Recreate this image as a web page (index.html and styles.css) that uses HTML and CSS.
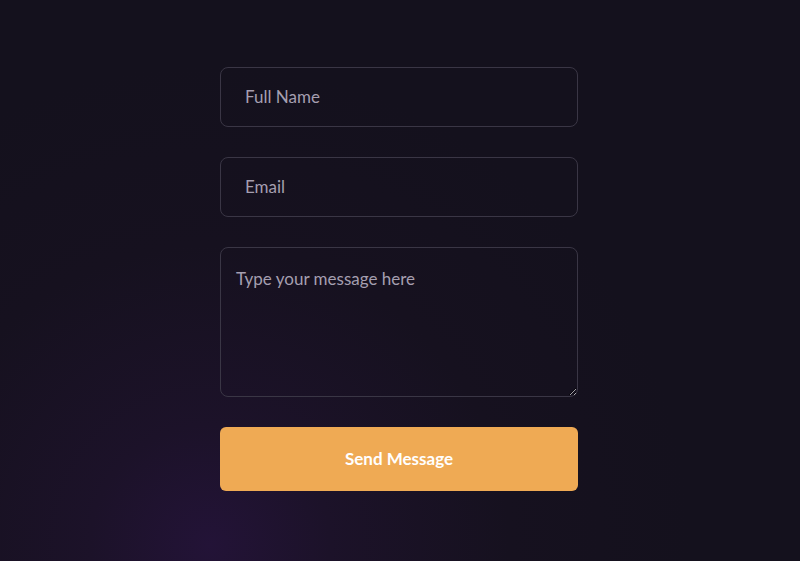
FILE: index.html
```html
<!DOCTYPE html>
<html lang="en">
<head>
<meta charset="utf-8">
<title>Contact</title>
<link rel="stylesheet" href="styles.css">
</head>
<body>
<main class="page">
  <form class="contact-form">
    <input class="field" type="text" placeholder="Full Name">
    <input class="field" type="email" placeholder="Email">
    <textarea class="field field-area" placeholder="Type your message here"></textarea>
    <button class="send" type="button">Send Message</button>
  </form>
</main>
</body>
</html>
```
FILE: styles.css
```css
html, body {
  margin: 0;
  height: 100%;
}
body {
  background-color: #14111d;
  background-image: radial-gradient(circle at 210px 545px, #231337 0px, #1c1229 120px, #16111f 300px, #14111d 480px);
  font-family: "Lato", "Noto Sans", sans-serif;
  overflow: hidden;
}
.page {
  display: flex;
  justify-content: center;
  padding-top: 67px;
  padding-right: 2px;
}
.contact-form {
  width: 358px;
  display: flex;
  flex-direction: column;
  gap: 30px;
}
.field {
  box-sizing: border-box;
  height: 60px;
  margin: 0;
  padding: 0 24px 1px;
  background: transparent;
  border: 1px solid #3a3645;
  border-radius: 8px;
  color: #d8d4e0;
  font-family: inherit;
  font-size: 17px;
  outline: none;
}
.field::placeholder {
  color: #a59fb0;
  opacity: 1;
}
.field-area {
  height: 150px;
  padding: 21px 15px;
  resize: vertical;
  line-height: 20px;
}
.send {
  height: 64px;
  padding: 0 0 1px;
  border: none;
  border-radius: 6px;
  background: #efaa54;
  color: #ffffff;
  font-family: inherit;
  font-size: 17px;
  font-weight: 700;
  cursor: pointer;
}
```
